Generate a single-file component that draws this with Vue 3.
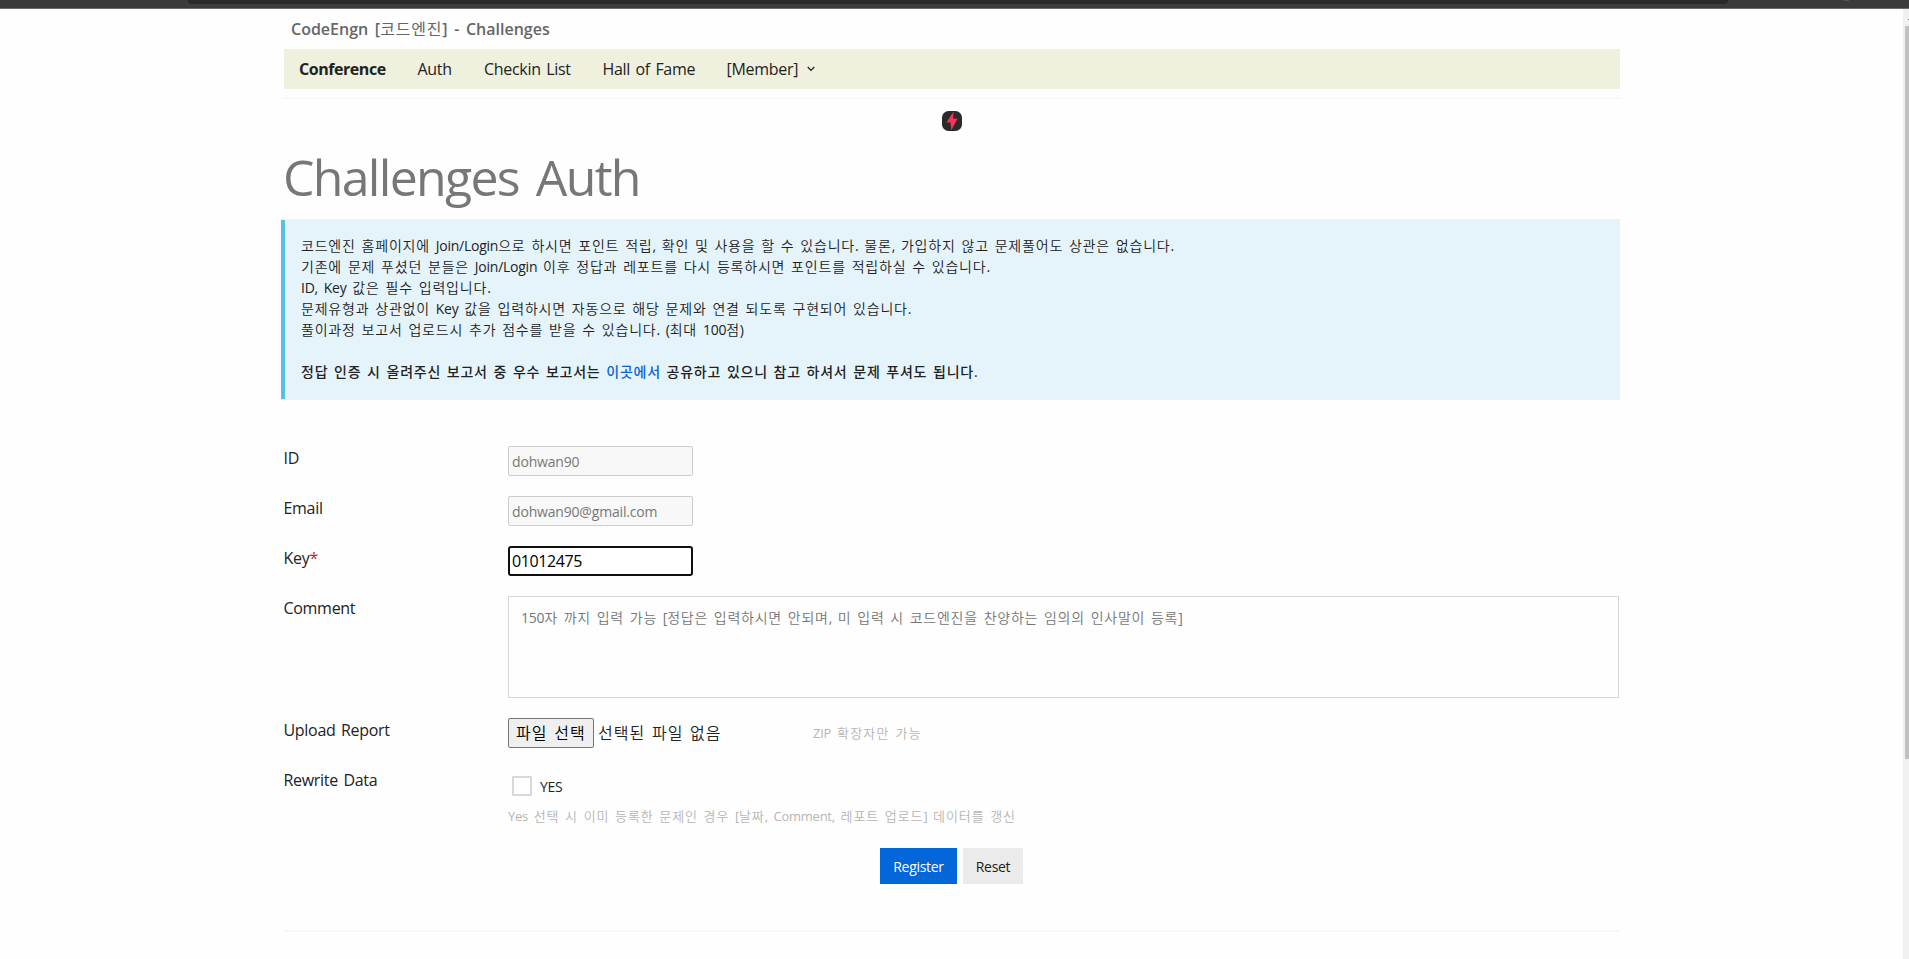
<script setup>
const lines = [
  '코드엔진 홈페이지에 Join/Login으로 하시면 포인트 적립, 확인 및 사용을 할 수 있습니다. 물론, 가입하지 않고 문제풀어도 상관은 없습니다.',
  '기존에 문제 푸셨던 분들은 Join/Login 이후 정답과 레포트를 다시 등록하시면 포인트를 적립하실 수 있습니다.',
  'ID, Key 값은 필수 입력입니다.',
  '문제유형과 상관없이 Key 값을 입력하시면 자동으로 해당 문제와 연결 되도록 구현되어 있습니다.',
  '풀이과정 보고서 업로드시 추가 점수를 받을 수 있습니다. (최대 100점)',
]
const comment = '150자 까지 입력 가능 [정답은 입력하시면 안되며, 미 입력 시 코드엔진을 찬양하는 임의의 인사말이 등록]'
const hint = 'Yes 선택 시 이미 등록한 문제인 경우 [날짜, Comment, 레포트 업로드] 데이터를 갱신'
// Latin runs get tighter tracking than the Hangul around them.
const runs = (text) => text.split(/([A-Za-z0-9/,.()[\]]+)/).map((t, i) => ({ t, latin: i % 2 === 1 }))
</script>

<template>
  <div class="screen">
    <div class="chrome"><div class="omnibox"></div><i class="speck"></i></div>
    <div class="viewport">
      <main class="page">
        <div class="site-title"><span>CodeEngn [<em>코드엔진</em>] - Challenges</span></div>
        <nav class="nav">
          <a class="conf">Conference</a>
          <a class="auth">Auth</a>
          <a class="checkin">Checkin List</a>
          <a class="hall">Hall of Fame</a>
          <a class="member">[Member]</a>
          <svg class="chev" width="8" height="6" viewBox="0 0 8 6"><path d="M.7 1L4 4.4 7.3 1" fill="none" stroke="#1d1d1d" stroke-width="1.2" /></svg>
        </nav>
        <div class="rule"></div>
        <div class="badge">
          <svg width="20" height="20" viewBox="0 0 20 20">
            <rect width="20" height="20" rx="6.5" fill="#2b2b2d" />
            <path d="M11.4 .8L4.5 11.4h4L9.3 19.2l6.2-11.4h-4.4z" fill="#fb3355" />
          </svg>
        </div>
        <h1><span>Challenges Auth</span></h1>
        <section class="notice">
          <p v-for="l in lines" :key="l" class="ko"><span v-for="(r, i) in runs(l)" :key="i" :class="{ la: r.latin }">{{ r.t }}</span></p>
          <p>&nbsp;</p>
          <p class="ko strong"><span>정답 인증 시 올려주신 보고서 중 우수 보고서는 <a>이곳에서</a> 공유하고 있으니 참고 하셔서 문제 푸셔도 됩니다.</span></p>
        </section>
        <form class="form" @submit.prevent>
          <div class="row"><label>ID</label><div class="input disabled id">dohwan90</div></div>
          <div class="row"><label>Email</label><div class="input disabled email">dohwan90@gmail.com</div></div>
          <div class="row"><label class="l-key">Key<b>*</b></label><div class="input focus">01012475</div></div>
          <div class="row tall"><label>Comment</label><div class="area ko"><span v-for="(r, i) in runs(comment)" :key="i" :class="{ la: r.latin }">{{ r.t }}</span></div></div>
          <div class="row upload">
            <label>Upload Report</label>
            <div class="filebtn"><span>파일 선택</span></div>
            <span class="filename">선택된 파일 없음</span>
            <span class="zip ko"><span class="la">ZIP</span> 확장자만 가능</span>
          </div>
          <div class="row check">
            <label>Rewrite Data</label>
            <div class="box"></div><span class="yes">YES</span>
          </div>
          <div class="hint ko"><span v-for="(r, i) in runs(hint)" :key="i" :class="{ la: r.latin }">{{ r.t }}</span></div>
          <div class="actions"><div class="btn primary"><span>Register</span></div><div class="btn"><span>Reset</span></div></div>
        </form>
        <div class="rule"></div>
      </main>
      <div class="scrollbar"><i class="arrow"></i><div class="thumb"></div></div>
    </div>
  </div>
</template>

<style>
body { margin: 0; overflow: hidden; background: #fefefe; }
</style>

<style scoped>
.screen { width: 1909px; height: 959px; overflow: hidden; background: #fefefe; color: #222; font: 400 16px/24px "Open Sans", "Noto Sans CJK KR", sans-serif; letter-spacing: -0.3px; word-spacing: 1.6px; white-space: nowrap; display: flex; flex-direction: column; }
.screen * { box-sizing: border-box; }
.ko { font-weight: 350; letter-spacing: 0.8px; word-spacing: 1.4px; }
.la { font-weight: 400; letter-spacing: -0.25px; }
.chrome { flex: none; height: 9px; background: #3b3b3b; border-bottom: 1px solid #6c6c6c; display: flex; padding-left: 188px; }
.omnibox { width: 1540px; height: 4px; background: #292929; border-radius: 0 0 4px 4px; }
.speck { width: 5px; height: 1px; margin-left: 116px; background: #555; }
.viewport { flex: 1; display: flex; min-height: 0; }
.page { width: 1336px; margin-left: 284px; flex: none; }
.scrollbar { margin-left: auto; width: 6px; background: #f0f0f0; padding-top: 10px; display: flex; flex-direction: column; align-items: flex-end; }
.arrow { width: 1px; height: 1px; background: #777; }
.thumb { width: 4px; height: 733px; margin-top: 6px; background: #c1c1c1; }
.site-title { height: 40px; padding: 8px 0 0 7px; font-weight: 600; color: #666; letter-spacing: 0; word-spacing: 2.5px; }
.site-title em { font-style: normal; font-weight: 400; letter-spacing: 0.8px; }
.nav { height: 40px; background: #eff0dd; display: flex; align-items: center; padding-left: 15px; }
.nav a { flex: none; line-height: 40px; }
.conf { width: 118.5px; font-weight: 700; letter-spacing: -0.45px; }
.auth { width: 66.5px; }
.checkin { width: 118.5px; }
.hall { width: 124px; }
.member { width: 80.5px; }
.rule { height: 2px; margin-top: 8px; background: #f8f8f8; }
.badge { height: 20px; margin-top: 12px; padding-left: 658px; }
.badge svg { display: block; }
h1 { margin: 11px 0 0 -1px; height: 77px; font-size: 50px; line-height: 70px; font-weight: 400; color: #777; letter-spacing: -1.7px; word-spacing: 5.5px; }
.notice { position: relative; margin-left: -3px; height: 181px; padding: 16px 0 0 20px; background: #e5f4fb; font-size: 14px; }
.notice::before { content: ""; position: absolute; left: 0; top: 1px; width: 4px; height: 179px; background: #5bbdeb; }
.notice p { margin: 0; line-height: 21px; }
.notice .strong { font-weight: 500; letter-spacing: 0.75px; }
.strong a { color: #0563d8; }
.form { padding-top: 46px; }
.row { display: flex; height: 50px; }
.row label { width: 224.5px; margin-left: -0.5px; flex: none; line-height: 24px; }
.l-key b { font-weight: 400; color: #a33; }
.input { width: 185px; height: 30px; border: 1px solid #ccc; border-radius: 2px; background: #fff; padding-left: 3px; line-height: 29px; }
.disabled { background: #f8f8f8; color: #777; font-size: 14px; line-height: 30px; letter-spacing: -0.18px; }
.focus { border: 2px solid #101010; border-radius: 3px; color: #000; padding-left: 2px; line-height: 26px; letter-spacing: -0.4px; }
.row.tall { height: 122px; }
.area { width: 1111px; height: 102px; border: 1px solid #d8d8d8; padding: 9px 0 0 12px; font-size: 14px; color: #757575; letter-spacing: 0.75px; }
.filebtn { width: 86px; height: 30px; border: 1px solid #767676; border-radius: 2px; background: #efefef; color: #000; padding-left: 7px; line-height: 28px; flex: none; font-weight: 350; letter-spacing: 1px; }
.filename { width: 215px; margin-left: 4px; line-height: 30px; font-weight: 350; letter-spacing: 1px; }
.zip { font-size: 13px; color: #b5b5b5; line-height: 31px; letter-spacing: 1.15px; }
.row.check { height: 38px; }
.row.check label { line-height: 24px; }
.box { width: 20px; height: 20px; margin: 8px 8px 0 4px; border: 2px solid #d9d9d9; background: #fff; }
.yes { font-size: 14px; line-height: 38px; }
.hint { margin-left: 224px; font-size: 13px; line-height: 21px; height: 42px; color: #b5b5b5; letter-spacing: 0.9px; }
.actions { display: flex; gap: 6px; padding-left: 596px; height: 74px; }
.btn { width: 60px; height: 36px; background: #ebebeb; font-size: 14px; line-height: 38px; text-align: center; }
.primary { width: 77px; background: #0366d9; color: #fff; }
</style>
